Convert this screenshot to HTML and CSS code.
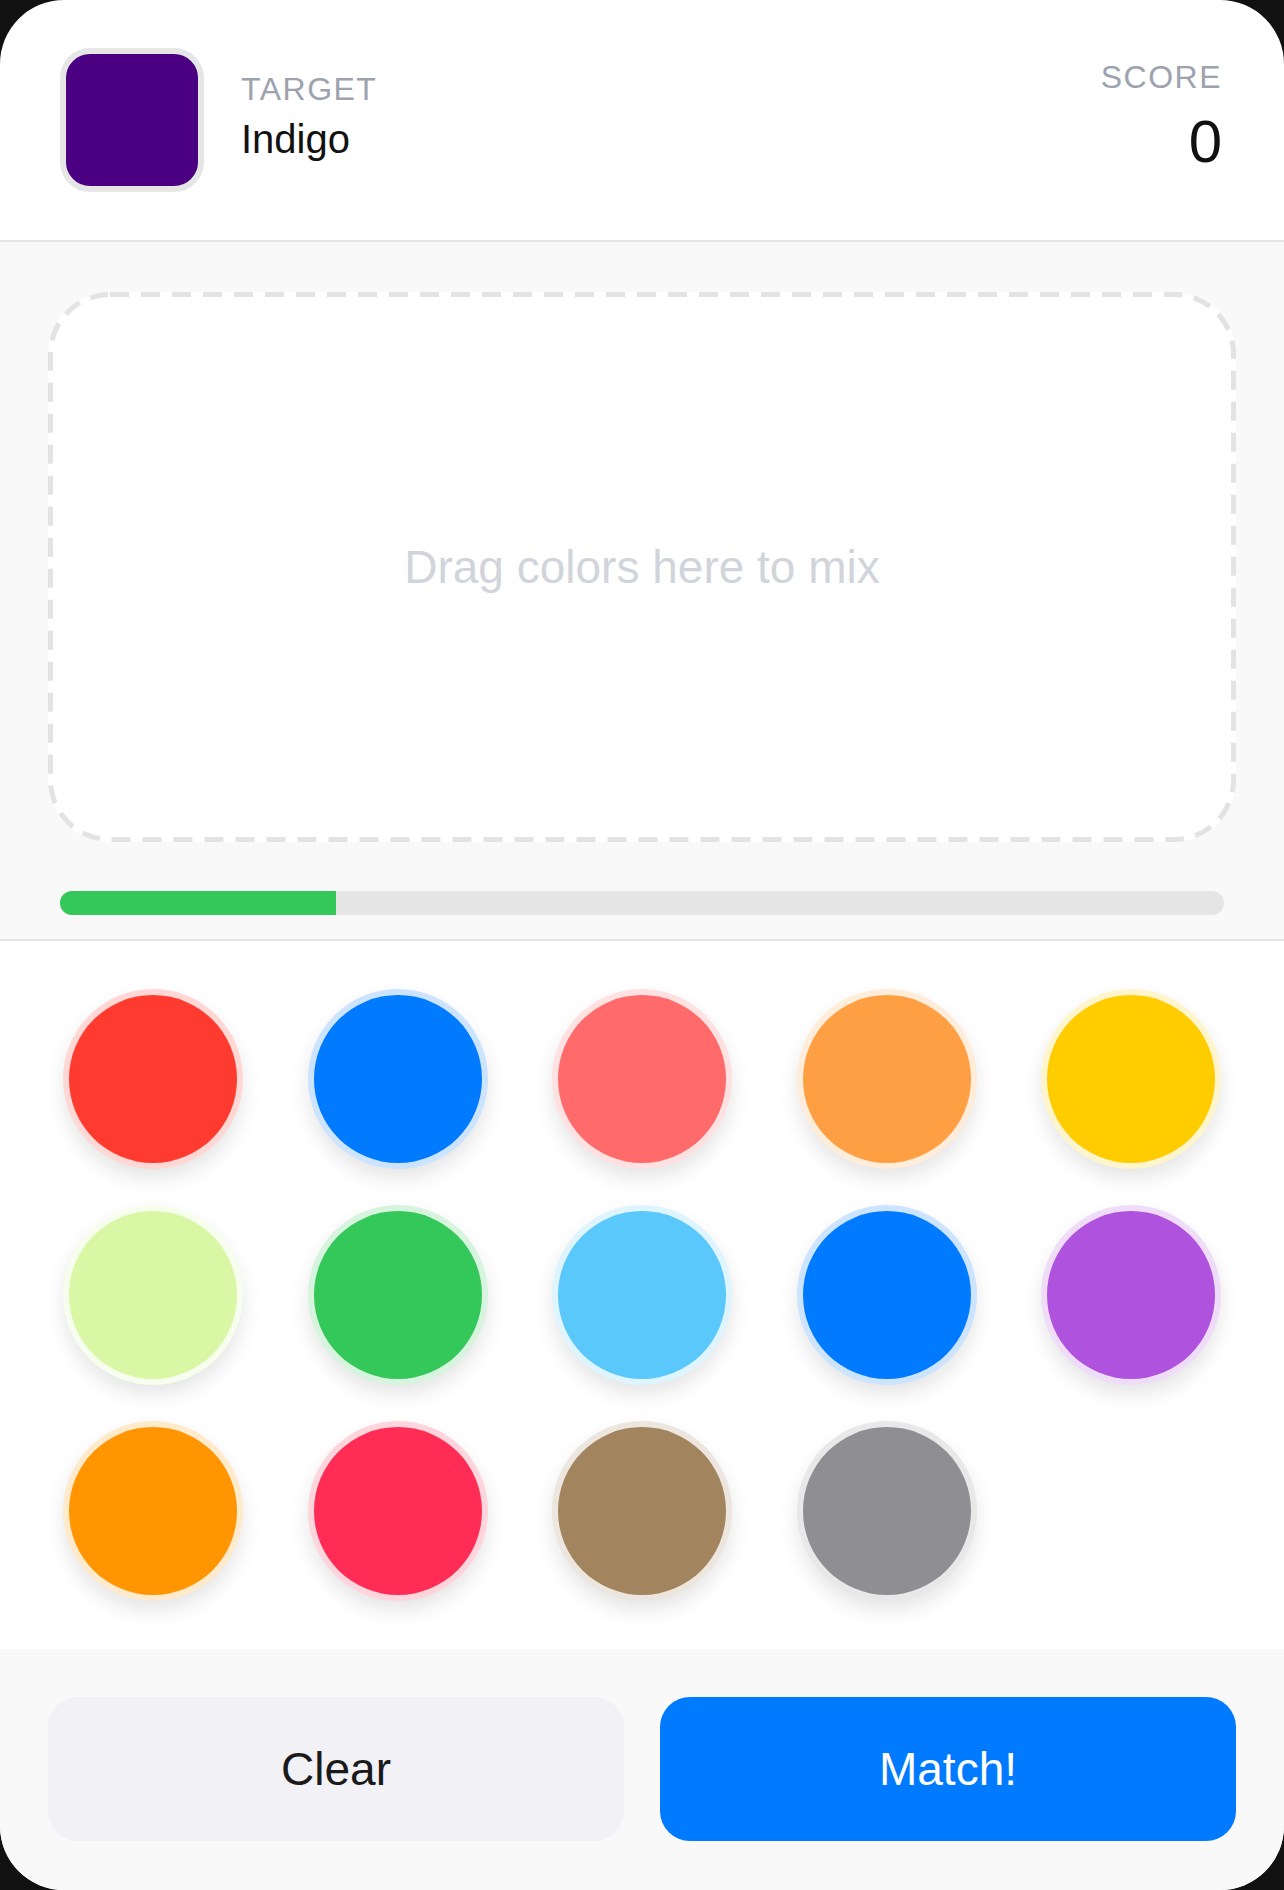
FILE: index.html
```html
<!DOCTYPE html>
<html lang="en">
<head>
    <meta charset="UTF-8">
    <meta name="viewport" content="width=device-width, initial-scale=1.0">
    <title>Color Mixer</title>
    <link rel="stylesheet" href="styles.css">
</head>
<body>
    <div class="app">
        <header class="top-bar">
            <div class="target">
                <div class="target-swatch"></div>
                <div class="target-info">
                    <span class="label">TARGET</span>
                    <span class="target-name">Indigo</span>
                </div>
            </div>
            <div class="score">
                <span class="label">SCORE</span>
                <span class="score-value">0</span>
            </div>
        </header>

        <section class="mix-area">
            <div class="drop-zone">
                <span class="drop-hint">Drag colors here to mix</span>
            </div>
            <div class="progress">
                <div class="progress-fill" style="width: 23.7%"></div>
            </div>
        </section>

        <section class="palette">
            <div class="paint" style="--c: #ff3b30"></div>
            <div class="paint" style="--c: #007aff"></div>
            <div class="paint" style="--c: #ff6b6b"></div>
            <div class="paint" style="--c: #ff9f43"></div>
            <div class="paint" style="--c: #ffcc00"></div>
            <div class="paint" style="--c: #daf7a6"></div>
            <div class="paint" style="--c: #34c759"></div>
            <div class="paint" style="--c: #5ac8fa"></div>
            <div class="paint" style="--c: #007aff"></div>
            <div class="paint" style="--c: #af52de"></div>
            <div class="paint" style="--c: #ff9500"></div>
            <div class="paint" style="--c: #ff2d55"></div>
            <div class="paint" style="--c: #a2845e"></div>
            <div class="paint" style="--c: #8e8e93"></div>
        </section>

        <footer class="actions">
            <button class="btn btn-clear">Clear</button>
            <button class="btn btn-match">Match!</button>
        </footer>
    </div>
</body>
</html>
```

FILE: styles.css
```css
* {
    box-sizing: border-box;
}

body {
    margin: 0;
    background-color: #111;
    font-family: 'Liberation Sans', Arial, sans-serif;
    color: #111;
}

.app {
    min-height: 100vh;
    background-color: #fff;
    border-radius: 64px;
    overflow: hidden;
    display: flex;
    flex-direction: column;
}

/* header: target color and score */
.top-bar {
    display: flex;
    justify-content: space-between;
    align-items: center;
    padding: 48px 62px 48px 60px;
    border-bottom: 2px solid #e5e5e5;
}

.target {
    display: flex;
    align-items: center;
    gap: 37px;
}

.target-swatch {
    width: 144px;
    height: 144px;
    background-color: #4b0082;
    border: 6px solid #e6e6e6;
    border-radius: 30px;
}

.target-info,
.score {
    display: flex;
    flex-direction: column;
    padding-bottom: 8px;
}

.target-info {
    gap: 14px;
}

.score {
    align-items: flex-end;
    gap: 19px;
}

.label {
    font-size: 32px;
    line-height: 1;
    letter-spacing: 1.5px;
    color: #9ca3af;
}

.target-name {
    font-size: 40px;
    line-height: 1;
}

.score-value {
    font-size: 60px;
    line-height: 1;
}

/* mixing bowl */
.mix-area {
    background-color: #f9f9f9;
    padding: 50px 48px 24px;
    border-bottom: 2px solid #e5e5e5;
}

/* dashed outline drawn as svg so the dashes can be longer than a css border */
.drop-zone {
    height: 550px;
    background: #fff url("data:image/svg+xml,%3Csvg xmlns='http://www.w3.org/2000/svg'%3E%3Crect width='100%25' height='100%25' rx='62' ry='62' fill='none' stroke='%23e3e3e3' stroke-width='10' stroke-dasharray='19 12'/%3E%3C/svg%3E");
    border-radius: 62px;
    display: flex;
    align-items: center;
    justify-content: center;
}

.drop-hint {
    font-size: 46px;
    color: #d1d5db;
}

.progress {
    height: 24px;
    margin: 49px 12px 0;
    background-color: #e5e5e5;
    border-radius: 12px;
    overflow: hidden;
}

.progress-fill {
    height: 100%;
    background-color: #34c759;
}

/* paint palette */
.palette {
    display: grid;
    grid-template-columns: repeat(5, 1fr);
    gap: 36px 34.5px;
    justify-items: center;
    padding: 48px;
}

.paint {
    width: 180px;
    height: 180px;
    border-radius: 50%;
    background-color: var(--c);
    border: 6px solid rgba(255, 255, 255, 0.8);
    box-shadow: 0 10px 20px rgba(0, 0, 0, 0.1);
    cursor: grab;
}

/* bottom buttons */
.actions {
    flex: 1;
    display: grid;
    grid-template-columns: 1fr 1fr;
    gap: 36px;
    padding: 48px;
    background-color: #f9f9f9;
}

.btn {
    height: 144px;
    border: none;
    border-radius: 30px;
    font-family: inherit;
    font-size: 46px;
    cursor: pointer;
}

.btn-clear {
    background-color: #f1f1f6;
    color: #1a1a1a;
}

.btn-match {
    background-color: #007aff;
    color: #fff;
}
```
